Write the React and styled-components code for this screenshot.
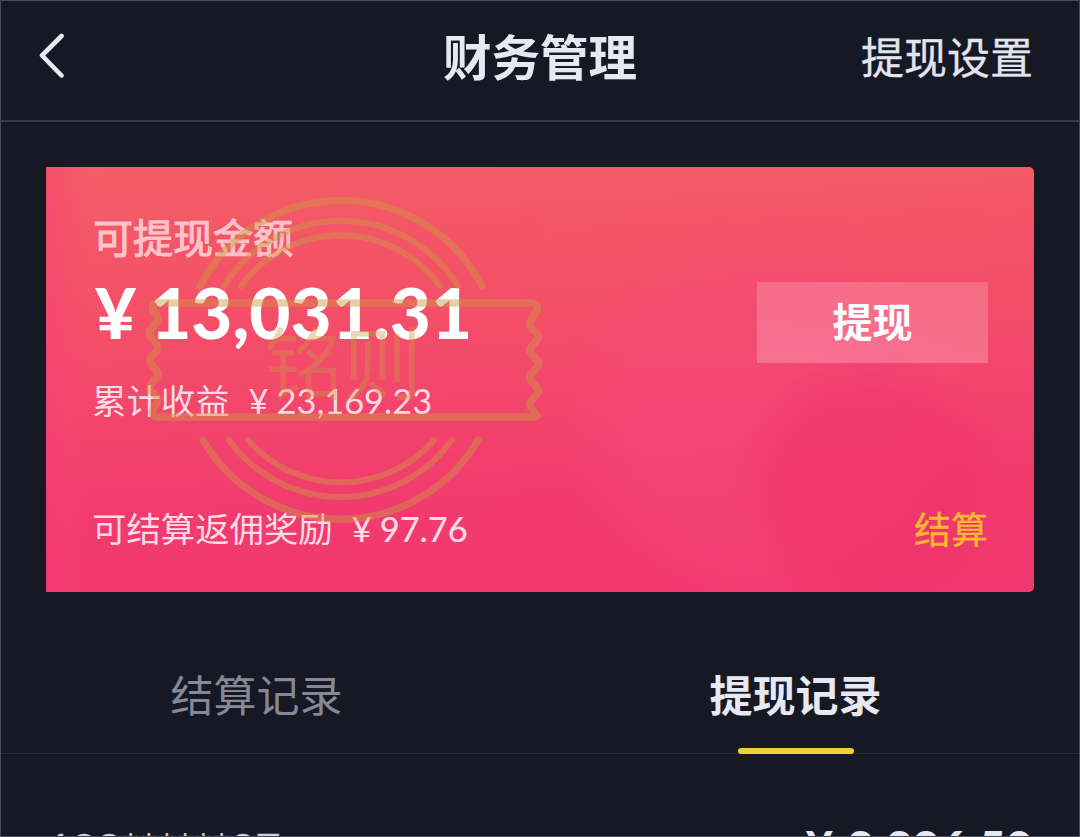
import React from "react";
import styled, { createGlobalStyle } from "styled-components";

const Global = createGlobalStyle`
  * { box-sizing: border-box; }
  html, body { margin: 0; background: #161824; }
  body { font-family: Lato, "Noto Sans CJK SC", sans-serif; overflow: hidden; }
  button { font: inherit; border: 0; background: none; padding: 0; }
`;

const Screen = styled.div`
  width: 1080px;
  height: 837px;
  overflow: hidden;
  display: flex;
  flex-direction: column;
  border: 1px solid #484a57;
  background: #161824;
  color: #e6e8f2;
`;

const Header = styled.header`
  flex: none;
  height: 121px;
  display: grid;
  grid-template-columns: 1fr auto 1fr;
  align-items: start;
  padding: 21px 46px 0 46px;
  border-bottom: 2px solid #373945;
`;

const BackButton = styled.button`
  width: 28px;
  height: 46px;
  margin: 10px 0 0 -9px;
  svg { display: block; }
`;

const Title = styled.h1`
  margin: 0;
  font-size: 48.5px;
  line-height: 70px;
  font-weight: 700;
`;

const HeaderAction = styled.button`
  justify-self: end;
  font-size: 43px;
  line-height: 72px;
  color: #e2e4ee;
  -webkit-text-stroke: 0.3px currentColor;
`;

const Card = styled.section`
  flex: none;
  position: relative;
  height: 425px;
  margin: 45px 45px 0;
  padding: 47px 46px 0 47px;
  border-radius: 0 5px 5px 0;
  overflow: hidden;
  background:
    radial-gradient(circle at 825px 318px, rgba(238, 50, 104, 0.5) 0 90px, rgba(238, 50, 104, 0) 140px),
    radial-gradient(circle at 720px 250px, rgba(246, 75, 125, 0.4) 0 130px, rgba(246, 75, 125, 0) 210px),
    linear-gradient(90deg, rgba(245, 60, 120, 0.45) 0, rgba(245, 70, 115, 0.25) 25px, rgba(245, 70, 115, 0) 45px),
    linear-gradient(177deg, #f45e66 0%, #f45267 27%, #f3466b 52%, #f13b6e 75%, #f1386f 100%);
`;

const CardBody = styled.div`
  display: flex;
  justify-content: space-between;
`;

const Balance = styled.div`
  display: flex;
  flex-direction: column;
`;

const Label = styled.div`
  font-size: 40px;
  line-height: 50px;
  margin-top: -1px;
  color: #fec3cb;
  -webkit-text-stroke: 1.1px currentColor;
`;

const Amount = styled.div`
  display: flex;
  margin: 4px 0 0 2px;
  font-size: 71px;
  line-height: 90px;
  font-weight: 900;
  color: #fff;
`;

const Yen = styled.span`
  margin-right: ${(p) => p.$gap}px;
`;

const Line = styled.div`
  display: flex;
  margin-left: -1px;
  font-size: 34.4px;
  line-height: 50px;
  color: #fddbe5;
  margin-top: ${(p) => p.$top || 0}px;
`;

const Value = styled.span`
  margin-left: 19px;
  -webkit-text-stroke: ${(p) => (p.$strong ? 0.2 : 0)}px currentColor;
`;

const WithdrawButton = styled.button`
  width: 231px;
  height: 81px;
  margin-top: 68px;
  background: linear-gradient(180deg, rgba(255, 255, 255, 0.17), rgba(255, 255, 255, 0.22));
  color: #fff;
  font-size: 40px;
  font-weight: 700;
  line-height: 81px;
`;

const Footer = styled.div`
  display: flex;
  justify-content: space-between;
  margin-top: 77px;
`;

const SettleLink = styled.button`
  font-size: 37px;
  line-height: 54px;
  color: #fbb92e;
  -webkit-text-stroke: 0.3px currentColor;
`;

const Watermark = styled.svg`
  position: absolute;
  left: 94px;
  top: 23px;
  opacity: 0.45;
`;

const Tabs = styled.nav`
  flex: none;
  height: 162px;
  display: grid;
  grid-template-columns: 511px 1fr;
  align-items: end;
  border-bottom: 1px solid #282a36;
`;

const Tab = styled.button`
  height: 92px;
  display: flex;
  flex-direction: column;
  align-items: center;
  justify-content: space-between;
  font-size: 43px;
  line-height: 70px;
  font-weight: ${(p) => (p.$active ? 700 : 400)};
  color: ${(p) => (p.$active ? "#e6e8f2" : "#868895")};
  &::after {
    content: "";
    width: 116px;
    height: 6px;
    margin-bottom: -1px;
    border-radius: 3px;
    background: ${(p) => (p.$active ? "#ecd03c" : "transparent")};
  }
`;

const Record = styled.div`
  flex: none;
  display: flex;
  justify-content: space-between;
  padding: 63px 46px 0 46px;
  font-size: 43px;
  line-height: 60px;
  color: #cfd1dc;
`;

const Account = styled.span`
  margin-top: 2px;
  letter-spacing: -0.1px;
  -webkit-text-stroke: 0.5px currentColor;
`;

const RecordAmount = styled.span`
  display: flex;
  font-size: 46px;
  font-weight: 900;
  letter-spacing: 0.5px;
  color: #e6e8f2;
`;

const Seal = () => (
  <Watermark width="405" height="340" viewBox="140 190 405 340" fill="none" stroke="#cf9743" strokeLinecap="round" strokeLinejoin="round">
    <g strokeWidth="7">
      <path d="M200 286A159 159 0 0 1 482 286" />
      <path d="M203 440A159 159 0 0 0 478 440" />
    </g>
    <g strokeWidth="6">
      <path d="M224 286A137.500 137.500 0 0 1 458 286" />
      <path d="M241 286A123 123 0 0 1 440 286" />
      <path d="M229 440A137.500 137.500 0 0 0 452 440" />
      <path d="M248 440A123 123 0 0 0 434 440" />
    </g>
    <path
      strokeWidth="7.500"
      d="M157 303H531Q539 304 537 310L531 320Q528 325 532 329L537 333Q540 336 537 340L531 347Q528 350 531 353L537 360Q540 363 537 367L531 374Q528 377 531 381L537 387Q540 390 537 394L531 401Q528 405 531 408L537 416L534 417H157Q150 416 153 409L157 403Q159 400 156 396L151 391Q149 388 151 384L157 377Q159 374 157 371L151 364Q149 360 151 357L157 350Q159 347 156 343L150 336Q148 332 151 329L157 322Q159 318 156 314L153 310Q151 304 157 303Z"
    />
    <text x="264" y="394" fontSize="79" fontFamily="'Noto Sans CJK SC', sans-serif" fill="#cf9743" fillOpacity="0.85" stroke="none">铭则</text>
  </Watermark>
);

export default function App() {
  return (
    <Screen>
      <Global />
      <Header>
        <BackButton aria-label="返回">
          <svg width="28" height="46" viewBox="0 0 28 46" fill="none" stroke="#e6e8f2" strokeWidth="4.600" strokeLinecap="round" strokeLinejoin="round">
            <path d="M23.500 4L4 23.500L23.500 43.500" />
          </svg>
        </BackButton>
        <Title>财务管理</Title>
        <HeaderAction>提现设置</HeaderAction>
      </Header>
      <Card>
        <CardBody>
          <Balance>
            <Label>可提现金额</Label>
            <Amount><Yen $gap={14}>¥</Yen>13,031.31</Amount>
            <Line $top={19}>累计收益<Value><Yen $gap={8}>¥</Yen>23,169.23</Value></Line>
          </Balance>
          <WithdrawButton>提现</WithdrawButton>
        </CardBody>
        <Footer>
          <Line $top={1}>可结算返佣奖励<Value $strong><Yen $gap={8}>¥</Yen>97.76</Value></Line>
          <SettleLink>结算</SettleLink>
        </Footer>
        <Seal />
      </Card>
      <Tabs>
        <Tab>结算记录</Tab>
        <Tab $active>提现记录</Tab>
      </Tabs>
      <Record>
        <Account>189******97</Account>
        <RecordAmount><Yen $gap={14}>¥</Yen>2,296.50</RecordAmount>
      </Record>
    </Screen>
  );
}
